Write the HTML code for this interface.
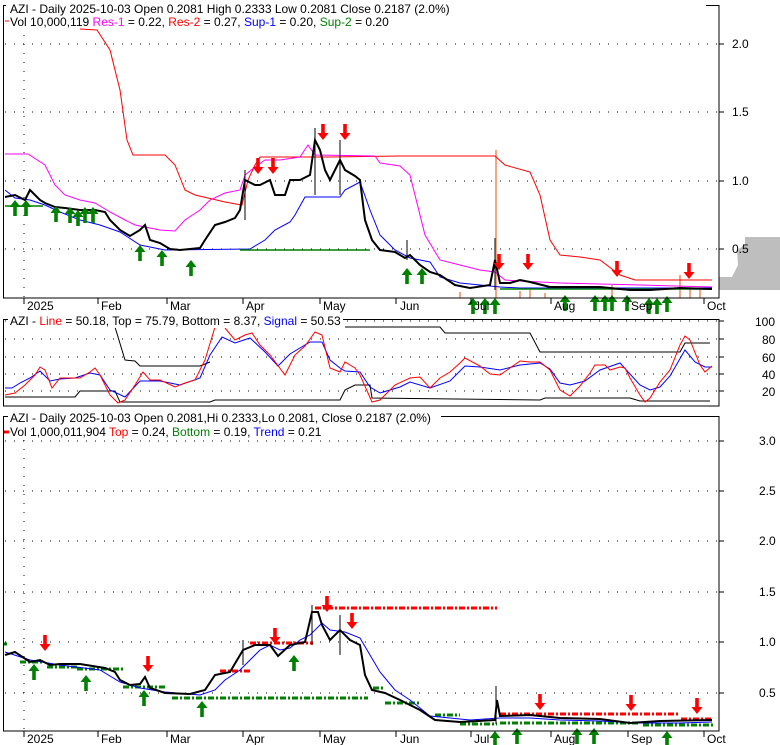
<!DOCTYPE html>
<html><head><meta charset="utf-8"><style>
html,body{margin:0;padding:0;background:#fff;}
svg{display:block;font-family:"Liberation Sans",sans-serif;}
</style></head><body>
<svg width="780" height="745" viewBox="0 0 780 745" xmlns="http://www.w3.org/2000/svg">
<defs>
<g id="up"><polygon points="0,0 -5.5,7 -1.8,7 -1.8,16 1.8,16 1.8,7 5.5,7" fill="#008000"/></g>
<g id="dn"><polygon points="0,0 -5.5,-7 -1.8,-7 -1.8,-16 1.8,-16 1.8,-7 5.5,-7" fill="#ff0000"/></g>
</defs>
<rect width="780" height="745" fill="#fff"/>

<!-- ============ PANEL 1 ============ -->
<polygon points="745,237 780,237 780,290 719,290 719,277 732,277 738,265 737,250 745,245" fill="#bebebe"/>
<g stroke="#000" stroke-dasharray="1,8" stroke-width="1">
<line x1="5" y1="44" x2="719" y2="44"/><line x1="5" y1="112" x2="719" y2="112"/>
<line x1="5" y1="181" x2="719" y2="181"/><line x1="5" y1="249" x2="719" y2="249"/>
<line x1="24" y1="8" x2="24" y2="298"/>
</g>
<g stroke="#f4a582" stroke-width="2">
<line x1="496" y1="150" x2="496" y2="298"/>
<line x1="530" y1="290" x2="530" y2="298"/><line x1="545" y1="293" x2="545" y2="298"/>
<line x1="612" y1="285" x2="612" y2="298"/><line x1="680" y1="275" x2="680" y2="298"/>
<line x1="690" y1="288" x2="690" y2="298"/><line x1="700" y1="290" x2="700" y2="298"/>
<line x1="460" y1="292" x2="460" y2="298"/><line x1="520" y1="291" x2="520" y2="298"/>
</g>
<polyline fill="none" stroke="#ff0000" stroke-width="1" points="80,29 97,30 110,50 120,90 127,140 133,155 165,155 175,165 185,190 195,195 225,202 242,205 248,180 255,165 260,157 330,157 400,156 495,156 505,165 530,172 540,195 550,240 560,255 580,257 600,260 620,275 635,280 712,280"/>
<polyline fill="none" stroke="#ff00ff" stroke-width="1" points="5,154 28,154 45,165 55,185 65,195 80,200 95,203 110,212 125,220 135,225 160,230 175,231 185,220 200,210 210,200 225,193 240,190 245,175 255,167 265,160 280,160 300,157 308,145 315,155 375,156 380,163 400,166 410,175 415,195 425,235 440,260 460,265 480,270 495,272 505,280 520,281 560,283 640,285 712,287"/>
<polyline fill="none" stroke="#0000ff" stroke-width="1" points="5,190 15,198 30,200 45,205 60,212 80,220 100,225 120,232 140,245 155,248 165,250 250,249 265,240 275,230 290,222 295,215 305,197 340,197 345,190 360,182 370,210 380,235 395,250 410,258 430,262 440,277 460,283 500,287 520,288 712,288"/>
<g stroke="#008000" stroke-width="1.5">
<line x1="5" y1="206" x2="43" y2="206"/><line x1="240" y1="250" x2="370" y2="250"/>
<line x1="500" y1="289" x2="712" y2="289"/>
</g>
<polyline fill="none" stroke="#000" stroke-width="2" points="5,197 15,195 25,200 30,190 40,200 45,203 55,207 65,208 80,210 95,210 105,212 110,220 120,230 130,236 140,230 145,225 150,240 160,243 170,249 180,250 190,249 200,248 205,240 215,225 225,222 235,218 240,210 245,180 255,185 260,185 270,180 275,195 285,195 290,180 300,180 310,175 315,140 320,150 325,170 330,180 340,160 345,170 355,176 360,180 365,220 372,240 380,250 395,252 405,258 410,255 420,265 430,272 440,275 455,285 470,288 490,285 495,260 500,283 510,283 520,280 530,282 550,287 570,287 600,287 630,290 650,290 680,288 712,289"/>
<g stroke="#000" stroke-width="1">
<line x1="315" y1="128" x2="315" y2="195"/><line x1="340" y1="140" x2="340" y2="195"/>
<line x1="495" y1="238" x2="495" y2="290"/><line x1="245" y1="170" x2="245" y2="220"/>
<line x1="407" y1="240" x2="407" y2="260"/>
</g>
<g>
<use href="#up" x="15" y="200"/><use href="#up" x="26" y="200"/><use href="#up" x="56" y="206"/>
<use href="#up" x="70" y="207"/><use href="#up" x="78" y="210"/><use href="#up" x="85" y="207"/><use href="#up" x="93" y="207"/>
<use href="#up" x="140" y="245"/><use href="#up" x="162" y="250"/><use href="#up" x="191" y="260"/>
<use href="#up" x="407" y="268"/><use href="#up" x="422" y="268"/>
<use href="#up" x="473" y="298"/><use href="#up" x="485" y="298"/><use href="#up" x="495" y="298"/>
<use href="#up" x="565" y="295"/><use href="#up" x="595" y="295"/><use href="#up" x="605" y="295"/><use href="#up" x="612" y="295"/>
<use href="#up" x="627" y="295"/><use href="#up" x="649" y="298"/><use href="#up" x="657" y="298"/><use href="#up" x="667" y="296"/>
<use href="#dn" x="258" y="174"/><use href="#dn" x="273" y="174"/><use href="#dn" x="323" y="140"/><use href="#dn" x="345" y="140"/>
<use href="#dn" x="499" y="270"/><use href="#dn" x="528" y="270"/><use href="#dn" x="617" y="277"/><use href="#dn" x="689" y="279"/>
</g>
<rect x="3.5" y="5.5" width="715.5" height="292.5" fill="none" stroke="#000" stroke-width="1"/>
<g stroke="#000"><line x1="719" y1="44" x2="724" y2="44"/><line x1="719" y1="112" x2="724" y2="112"/><line x1="719" y1="181" x2="724" y2="181"/><line x1="719" y1="249" x2="724" y2="249"/></g>
<g font-size="12" fill="#000">
<text x="732" y="48">2.0</text><text x="732" y="116">1.5</text><text x="732" y="185">1.0</text><text x="732" y="253">0.5</text>
</g>
<rect x="6" y="1" width="700" height="26" fill="#fff"/>
<text x="10" y="13" font-size="12">AZI - Daily 2025-10-03 Open 0.2081  High 0.2333  Low 0.2081  Close 0.2187 (2.0%)</text>
<text x="10" y="26" font-size="12">Vol 10,000,119 <tspan fill="#ff00ff">Res-1</tspan> = 0.22, <tspan fill="#ff0000">Res-2</tspan> = 0.27, <tspan fill="#0000ff">Sup-1</tspan> = 0.20, <tspan fill="#008000">Sup-2</tspan> = 0.20</text>
<line x1="5" y1="21" x2="9" y2="21" stroke="#ff0000"/>
<g stroke="#000"><line x1="24" y1="298" x2="24" y2="304"/><line x1="98" y1="298" x2="98" y2="304"/><line x1="167" y1="298" x2="167" y2="304"/><line x1="243" y1="298" x2="243" y2="304"/><line x1="320" y1="298" x2="320" y2="304"/><line x1="396" y1="298" x2="396" y2="304"/><line x1="471" y1="298" x2="471" y2="304"/><line x1="551" y1="298" x2="551" y2="304"/><line x1="628" y1="298" x2="628" y2="304"/><line x1="704" y1="298" x2="704" y2="304"/></g>
<g font-size="12"><text x="27" y="310">2025</text><text x="101" y="310">Feb</text><text x="170" y="310">Mar</text><text x="246" y="310">Apr</text><text x="323" y="310">May</text><text x="400" y="310">Jun</text><text x="474" y="310">Jul</text><text x="554" y="310">Aug</text><text x="631" y="310">Sep</text><text x="707" y="310">Oct</text></g>

<!-- ============ PANEL 2 ============ -->
<g stroke="#000" stroke-dasharray="1,8"><line x1="5" y1="339" x2="719" y2="339"/><line x1="5" y1="357" x2="719" y2="357"/><line x1="5" y1="374" x2="719" y2="374"/><line x1="5" y1="391" x2="719" y2="391"/><line x1="5" y1="321" x2="719" y2="321"/></g>
<polyline fill="none" stroke="#000" points="115,327 125,360 135,361 140,366 200,366 210,362"/>
<polyline fill="none" stroke="#000" points="345,327 440,327 445,333 530,333 540,352 680,352 685,343 710,343"/>
<polyline fill="none" stroke="#000" points="5,397 75,397 80,391 115,391 120,402 210,402 215,400 340,400 345,390 355,385 370,385 372,398 540,400 545,398 630,398 640,401 680,401 710,401"/>
<polyline fill="none" stroke="#0000ff" points="5,388 12,388 20,383 30,378 40,371 50,381 60,379 75,378 90,373 100,375 110,390 125,397 140,381 160,381 180,385 200,378 210,355 222,337 235,343 250,338 265,352 278,366 290,354 310,342 322,342 330,360 340,368 345,371 360,372 370,387 380,393 400,387 410,382 430,388 450,381 465,366 480,367 500,370 520,365 540,363 550,369 560,383 570,385 585,381 600,370 620,363 640,385 650,390 660,387 670,376 685,350 695,362 705,367 712,367"/>
<polyline fill="none" stroke="#ff0000" points="5,395 15,393 25,385 35,375 40,367 45,370 52,388 60,378 70,378 80,378 90,372 95,368 100,375 110,395 118,403 125,400 135,385 143,372 150,380 160,380 175,387 185,383 195,380 205,360 215,327"/>
<polyline fill="none" stroke="#ff0000" points="225,328 235,340 245,335 252,333 260,345 270,355 285,375 295,355 305,346 315,332 322,335 330,368 340,372 345,362 355,368 360,375 372,402 380,400 395,385 410,378 420,377 430,388 440,378 450,372 460,363 465,358 480,366 490,374 500,375 520,361 530,362 540,362 550,370 560,390 570,396 580,386 590,373 595,365 605,365 610,370 620,367 625,368 630,378 640,395 645,402 650,398 660,382 670,370 680,345 685,336 690,340 700,365 705,372 712,366"/>
<rect x="3.5" y="319.5" width="715.5" height="86.5" fill="none" stroke="#000"/>
<g stroke="#000"><line x1="719" y1="321" x2="724" y2="321"/><line x1="719" y1="339" x2="724" y2="339"/><line x1="719" y1="357" x2="724" y2="357"/><line x1="719" y1="374" x2="724" y2="374"/><line x1="719" y1="391" x2="724" y2="391"/></g>
<g font-size="12"><text x="755" y="326">100</text><text x="762" y="344">80</text><text x="762" y="362">60</text><text x="762" y="379">40</text><text x="762" y="396">20</text></g>
<rect x="8" y="314" width="335" height="14" fill="#fff"/>
<text x="10" y="325" font-size="12">AZI - <tspan fill="#ff0000">Line</tspan> = 50.18, Top = 75.79, Bottom = 8.37, <tspan fill="#0000ff">Signal</tspan> = 50.53</text>

<!-- ============ PANEL 3 ============ -->
<g stroke="#000" stroke-dasharray="1,8">
<line x1="5" y1="441" x2="719" y2="441"/><line x1="5" y1="491" x2="719" y2="491"/><line x1="5" y1="541" x2="719" y2="541"/><line x1="5" y1="592" x2="719" y2="592"/><line x1="5" y1="642" x2="719" y2="642"/><line x1="5" y1="693" x2="719" y2="693"/>
<line x1="24" y1="440" x2="24" y2="731"/></g>
<g stroke="#008000" stroke-width="3" stroke-dasharray="6,2,2,2" fill="none">
<line x1="20" y1="662" x2="43" y2="662"/><line x1="47" y1="667" x2="77" y2="667"/><line x1="77" y1="669" x2="123" y2="669"/>
<line x1="123" y1="687" x2="167" y2="687"/><line x1="172" y1="698" x2="368" y2="698"/><line x1="373" y1="688" x2="383" y2="688"/>
<line x1="385" y1="703" x2="420" y2="703"/><line x1="435" y1="715" x2="460" y2="715"/><line x1="460" y1="724" x2="497" y2="724"/>
<line x1="500" y1="723" x2="640" y2="723"/><line x1="643" y1="725" x2="713" y2="725"/><line x1="3" y1="644" x2="7" y2="644"/>
</g>
<g stroke="#ff0000" stroke-width="3" stroke-dasharray="6,2,2,2" fill="none">
<line x1="250" y1="643" x2="313" y2="643"/><line x1="220" y1="671" x2="252" y2="671"/><line x1="315" y1="608" x2="497" y2="608"/>
<line x1="500" y1="714" x2="680" y2="714"/><line x1="681" y1="719" x2="713" y2="719"/>
</g>
<polyline fill="none" stroke="#0000ff" points="5,652 30,660 60,665 100,670 120,682 140,688 165,692 200,695 215,690 225,680 240,670 250,660 260,650 270,645 280,650 290,648 300,640 310,635 322,623 330,630 345,632 360,638 370,655 380,672 395,690 410,700 430,716 470,720 500,718 530,718 560,720 600,721 640,723 680,723 712,722"/>
<polyline fill="none" stroke="#000" stroke-width="2" points="5,655 15,652 30,662 40,660 50,665 60,664 80,664 105,668 115,672 120,680 130,685 140,684 145,677 150,688 165,693 190,694 205,690 215,675 230,672 243,650 255,645 270,645 278,656 290,645 305,642 312,612 318,612 322,625 330,640 340,630 350,640 360,645 365,675 372,690 385,693 400,700 420,710 435,720 460,722 495,720 497,700 500,716 530,715 560,718 600,719 630,723 660,721 712,720"/>
<g stroke="#000"><line x1="312" y1="605" x2="312" y2="645"/><line x1="340" y1="615" x2="340" y2="655"/><line x1="496" y1="686" x2="496" y2="724"/><line x1="243" y1="640" x2="243" y2="665"/></g>
<g>
<use href="#up" x="34" y="664"/><use href="#up" x="86" y="675"/><use href="#up" x="144" y="690"/><use href="#up" x="202" y="701"/><use href="#up" x="294" y="655"/>
<use href="#up" x="495" y="731"/><use href="#up" x="517" y="728"/><use href="#up" x="577" y="728"/><use href="#up" x="594" y="728"/><use href="#up" x="667" y="731"/>
<use href="#dn" x="45" y="651"/><use href="#dn" x="148" y="672"/><use href="#dn" x="275" y="644"/><use href="#dn" x="327" y="612"/><use href="#dn" x="352" y="629"/>
<use href="#dn" x="540" y="710"/><use href="#dn" x="631" y="711"/><use href="#dn" x="697" y="714"/>
</g>
<rect x="3.5" y="416.5" width="715.5" height="314.5" fill="none" stroke="#000"/>
<g stroke="#000"><line x1="719" y1="441" x2="724" y2="441"/><line x1="719" y1="491" x2="724" y2="491"/><line x1="719" y1="541" x2="724" y2="541"/><line x1="719" y1="592" x2="724" y2="592"/><line x1="719" y1="642" x2="724" y2="642"/><line x1="719" y1="693" x2="724" y2="693"/></g>
<g font-size="12"><text x="759" y="445">3.0</text><text x="759" y="495">2.5</text><text x="759" y="545">2.0</text><text x="759" y="596">1.5</text><text x="759" y="646">1.0</text><text x="759" y="697">0.5</text></g>
<rect x="8" y="410" width="433" height="12" fill="#fff"/>
<text x="10" y="422" font-size="12">AZI - Daily 2025-10-03 Open 0.2081,Hi 0.2333,Lo 0.2081, Close 0.2187 (2.0%)</text>
<text x="10" y="436" font-size="12">Vol 1,000,011,904 <tspan fill="#ff0000">Top</tspan> = 0.24, <tspan fill="#008000">Bottom</tspan> = 0.19, <tspan fill="#0000ff">Trend</tspan> = 0.21</text>
<line x1="4" y1="432" x2="9" y2="432" stroke="#ff0000" stroke-width="3"/>
<g stroke="#000"><line x1="24" y1="731" x2="24" y2="737"/><line x1="98" y1="731" x2="98" y2="737"/><line x1="167" y1="731" x2="167" y2="737"/><line x1="243" y1="731" x2="243" y2="737"/><line x1="320" y1="731" x2="320" y2="737"/><line x1="396" y1="731" x2="396" y2="737"/><line x1="471" y1="731" x2="471" y2="737"/><line x1="551" y1="731" x2="551" y2="737"/><line x1="628" y1="731" x2="628" y2="737"/><line x1="704" y1="731" x2="704" y2="737"/></g>
<g font-size="12"><text x="27" y="743">2025</text><text x="101" y="743">Feb</text><text x="170" y="743">Mar</text><text x="246" y="743">Apr</text><text x="323" y="743">May</text><text x="400" y="743">Jun</text><text x="474" y="743">Jul</text><text x="554" y="743">Aug</text><text x="631" y="743">Sep</text><text x="707" y="743">Oct</text></g>
</svg>
</body></html>
